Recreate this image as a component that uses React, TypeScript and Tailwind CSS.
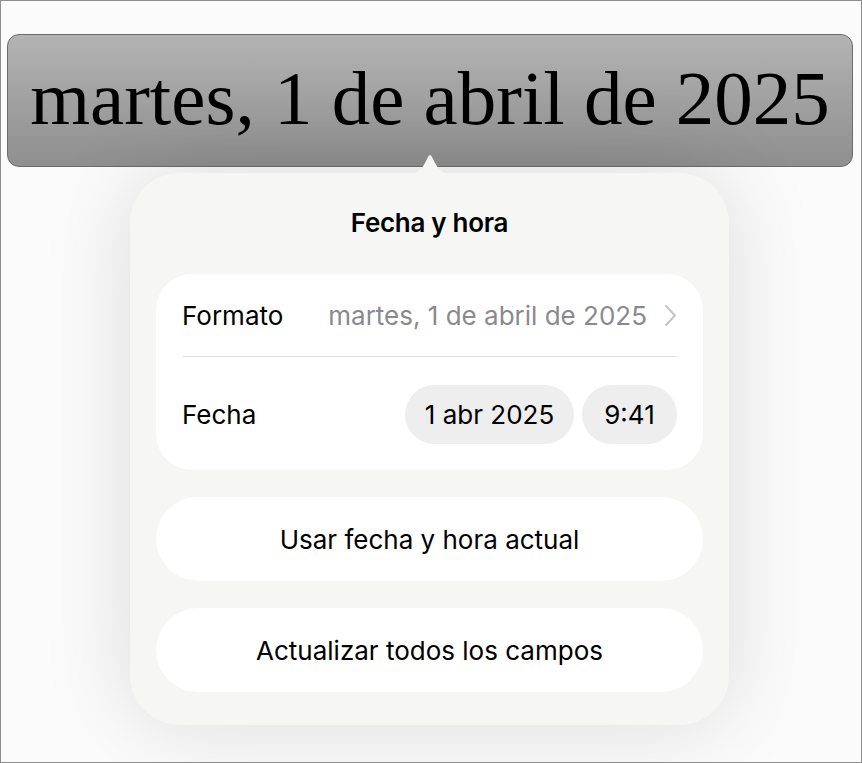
import React from 'react';

const sans = { fontFamily: 'Inter, "Noto Sans", sans-serif' };

const Chevron = () => (
  <svg width="13" height="23" viewBox="0 0 13 23" fill="none" className="shrink-0">
    <path d="M2 2l9 9.5L2 21" stroke="#c5c5c7" strokeWidth={2} strokeLinecap="round" strokeLinejoin="round" />
  </svg>
);

export default function App() {
  return (
    <div className="w-[862px] h-[763px] overflow-hidden border border-[#8d8d8d] bg-[#fbfbfb] flex flex-col">
      {/* selected date field in the document */}
      <div className="mt-[33px] ml-[6px] w-[846px] h-[133px] rounded-[12px] border border-[#6b6b6b] bg-gradient-to-b from-[#b3b3b3] to-[#8f8f8f] flex items-center justify-center">
        <span
          className="text-[77px] leading-none text-black -mt-[4px]"
          style={{ fontFamily: '"Liberation Serif", "DejaVu Serif", serif' }}
        >
          martes, 1 de abril de 2025
        </span>
      </div>

      {/* popover */}
      <div
        className="relative mt-[6px] ml-[129px] w-[599px] rounded-[50px] bg-[#f6f6f5] px-[26px] pb-[33px] shadow-[0_0_90px_rgba(0,0,0,0.13)]"
        style={sans}
      >
        <svg className="absolute left-[277px] -top-[23px]" width="46" height="24" viewBox="0 0 46 24">
          <path d="M0 24 C10 24 14 20 18 13 L21 7 Q23 3 25 7 L28 13 C32 20 36 24 46 24 Z" fill="#f6f6f5" />
        </svg>

        <h2 className="pt-[35px] pb-[36px] text-center text-[26px] leading-[30px] font-semibold text-black tracking-[-0.3px]">
          Fecha y hora
        </h2>

        <div className="rounded-[36px] bg-white px-[26px]">
          <div className="h-[83px] flex items-center justify-between border-b border-[#e2e2e2]">
            <span className="text-[26px] text-black">Formato</span>
            <div className="flex items-center gap-[17px]">
              <span className="text-[26px] text-[#8a8a8e]">martes, 1 de abril de 2025</span>
              <Chevron />
            </div>
          </div>
          <div className="pt-[28px] pb-[26px] flex items-center justify-between">
            <span className="text-[26px] text-black">Fecha</span>
            <div className="flex items-center gap-[8px]">
              <span className="h-[59px] w-[169px] rounded-full bg-[#eeeeef] flex items-center justify-center text-[26px] text-black">
                1 abr 2025
              </span>
              <span className="h-[59px] w-[95px] rounded-full bg-[#eeeeef] flex items-center justify-center text-[26px] text-black">
                9:41
              </span>
            </div>
          </div>
        </div>

        <button className="mt-[27px] w-full h-[84px] rounded-[42px] bg-white text-[26px] text-black">
          Usar fecha y hora actual
        </button>
        <button className="mt-[27px] w-full h-[84px] rounded-[42px] bg-white text-[26px] text-black">
          Actualizar todos los campos
        </button>
      </div>
    </div>
  );
}
